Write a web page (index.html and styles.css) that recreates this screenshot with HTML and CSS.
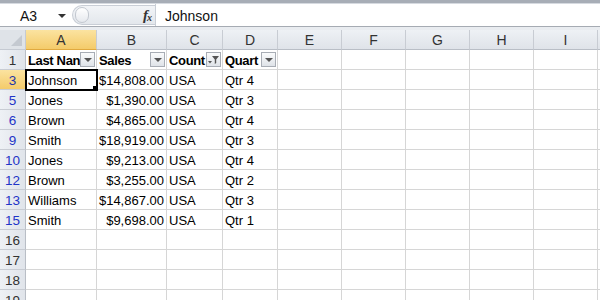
FILE: index.html
```html
<!DOCTYPE html>
<html>
<head>
<meta charset="utf-8">
<link rel="stylesheet" href="styles.css">
</head>
<body>
<div class="app">
  <div class="topstrip"></div>
  <div class="fbar">
    <div class="namebox"><span class="nb-text">A3</span><span class="nb-arrow"></span></div>
    <div class="grip">
      <span class="knob"></span>
      <span class="fx">f<sub>x</sub></span>
    </div>
    <div class="finput">Johnson</div>
  </div>
  <div class="gap"></div>
  <div class="sheet">
    <div class="corner"><span class="corner-tri"></span></div>
    <div class="ch sel">A</div><div class="ch">B</div><div class="ch">C</div><div class="ch">D</div><div class="ch">E</div><div class="ch">F</div><div class="ch">G</div><div class="ch">H</div><div class="ch">I</div><div class="ch rest"></div>

    <div class="rh">1</div>
    <div class="c hd">Last Nan<span class="fbtn"><span class="tri"></span></span></div>
    <div class="c hd">Sales<span class="fbtn"><span class="tri"></span></span></div>
    <div class="c hd">Count<span class="fbtn on"><svg width="13" height="13" viewBox="0 0 13 13"><path d="M5 3h7l-2.8 3.5v3.5l-1.4 1v-4.5z" fill="#555"/><path d="M1 8h4l-2 2.4z" fill="#555"/></svg></span></div>
    <div class="c hd">Quart<span class="fbtn"><span class="tri"></span></span></div>
    <div class="c"></div><div class="c"></div><div class="c"></div><div class="c"></div><div class="c"></div><div class="c rest"></div>

    <div class="rh blue selr">3</div>
    <div class="c active">Johnson<span class="handle"></span></div><div class="c num">$14,808.00</div><div class="c">USA</div><div class="c">Qtr 4</div>
    <div class="c"></div><div class="c"></div><div class="c"></div><div class="c"></div><div class="c"></div><div class="c rest"></div>

    <div class="rh blue">5</div>
    <div class="c">Jones</div><div class="c num">$1,390.00</div><div class="c">USA</div><div class="c">Qtr 3</div>
    <div class="c"></div><div class="c"></div><div class="c"></div><div class="c"></div><div class="c"></div><div class="c rest"></div>

    <div class="rh blue">6</div>
    <div class="c">Brown</div><div class="c num">$4,865.00</div><div class="c">USA</div><div class="c">Qtr 4</div>
    <div class="c"></div><div class="c"></div><div class="c"></div><div class="c"></div><div class="c"></div><div class="c rest"></div>

    <div class="rh blue">9</div>
    <div class="c">Smith</div><div class="c num">$18,919.00</div><div class="c">USA</div><div class="c">Qtr 3</div>
    <div class="c"></div><div class="c"></div><div class="c"></div><div class="c"></div><div class="c"></div><div class="c rest"></div>

    <div class="rh blue">10</div>
    <div class="c">Jones</div><div class="c num">$9,213.00</div><div class="c">USA</div><div class="c">Qtr 4</div>
    <div class="c"></div><div class="c"></div><div class="c"></div><div class="c"></div><div class="c"></div><div class="c rest"></div>

    <div class="rh blue">12</div>
    <div class="c">Brown</div><div class="c num">$3,255.00</div><div class="c">USA</div><div class="c">Qtr 2</div>
    <div class="c"></div><div class="c"></div><div class="c"></div><div class="c"></div><div class="c"></div><div class="c rest"></div>

    <div class="rh blue">13</div>
    <div class="c">Williams</div><div class="c num">$14,867.00</div><div class="c">USA</div><div class="c">Qtr 3</div>
    <div class="c"></div><div class="c"></div><div class="c"></div><div class="c"></div><div class="c"></div><div class="c rest"></div>

    <div class="rh blue">15</div>
    <div class="c">Smith</div><div class="c num">$9,698.00</div><div class="c">USA</div><div class="c">Qtr 1</div>
    <div class="c"></div><div class="c"></div><div class="c"></div><div class="c"></div><div class="c"></div><div class="c rest"></div>

    <div class="rh">16</div>
    <div class="c"></div><div class="c"></div><div class="c"></div><div class="c"></div><div class="c"></div><div class="c"></div><div class="c"></div><div class="c"></div><div class="c"></div><div class="c rest"></div>
    <div class="rh">17</div>
    <div class="c"></div><div class="c"></div><div class="c"></div><div class="c"></div><div class="c"></div><div class="c"></div><div class="c"></div><div class="c"></div><div class="c"></div><div class="c rest"></div>
    <div class="rh">18</div>
    <div class="c"></div><div class="c"></div><div class="c"></div><div class="c"></div><div class="c"></div><div class="c"></div><div class="c"></div><div class="c"></div><div class="c"></div><div class="c rest"></div>
    <div class="rh">19</div>
    <div class="c"></div><div class="c"></div><div class="c"></div><div class="c"></div><div class="c"></div><div class="c"></div><div class="c"></div><div class="c"></div><div class="c"></div><div class="c rest"></div>
  </div>
</div>
</body>
</html>
```

FILE: styles.css
```css
html, body {
  margin: 0;
  padding: 0;
  background: #ffffff;
  overflow: hidden;
}
.app {
  width: 600px;
  height: 300px;
  overflow: hidden;
  font-family: "Liberation Sans", Arial, sans-serif;
  color: #000;
}
.topstrip {
  height: 3px;
  background: #a7adb6;
  border-bottom: 1px solid #d6dae0;
}
.fbar {
  display: flex;
  height: 22px;
  background: #ffffff;
}
.namebox {
  width: 72px;
  display: flex;
  align-items: center;
  justify-content: space-between;
  box-sizing: border-box;
  padding: 1px 6px 0 20px;
  font-size: 14px;
  color: #111;
}
.nb-arrow {
  width: 0;
  height: 0;
  border-left: 4px solid transparent;
  border-right: 4px solid transparent;
  border-top: 4px solid #333;
}
.grip {
  width: 83px;
  margin: 1px 0;
  display: flex;
  align-items: center;
  justify-content: space-between;
  box-sizing: border-box;
  padding: 0 4px 0 2px;
  background: linear-gradient(#f2f4f7, #e3e7ec);
  border: 1px solid #c9ced6;
  border-right: none;
  border-radius: 11px 0 0 11px;
}
.knob {
  width: 14px;
  height: 16px;
  border-radius: 8px;
  border: 1px solid #c3c8d0;
  background: linear-gradient(#ffffff, #e6e9ee);
  box-sizing: border-box;
}
.fx {
  font-family: "Liberation Serif", "Times New Roman", serif;
  font-style: italic;
  font-weight: bold;
  font-size: 15px;
  color: #333;
  letter-spacing: -1px;
}
.fx sub {
  font-size: 10px;
  vertical-align: -1px;
}
.finput {
  flex: 1;
  display: flex;
  align-items: center;
  padding: 1px 0 0 9px;
  font-size: 14px;
  border-left: 1px solid #c9ced6;
  color: #111;
}
.gap {
  height: 3px;
  border-top: 1px solid #a6abb3;
  background: #e9ecf0;
}
.sheet {
  display: grid;
  grid-template-columns: 26px 71px 70px 56px 55px 64px 64px 64px 64px 64px 20px;
  grid-auto-rows: 20px;
  font-size: 13px;
}
.corner {
  background: #dfe3e8;
  border-right: 1px solid #c5cad2;
  border-bottom: 1px solid #c5cad2;
  position: relative;
}
.corner-tri {
  position: absolute;
  right: 3px;
  bottom: 3px;
  width: 0;
  height: 0;
  border-left: 11px solid transparent;
  border-bottom: 11px solid #c4c9d0;
}
.ch {
  background: linear-gradient(#eef1f5, #dfe3e9);
  border-right: 1px solid #c8ccd3;
  border-bottom: 1px solid #b9bec6;
  display: flex;
  align-items: center;
  justify-content: center;
  padding-top: 1px;
  font-size: 14px;
  color: #333;
}
.ch.sel {
  background: linear-gradient(#fbe3a0, #f4cb6a);
  border-bottom-color: #e0a93f;
}
.rh {
  background: linear-gradient(90deg, #eef1f5, #e0e4ea);
  border-right: 1px solid #b9bec6;
  border-bottom: 1px solid #c8ccd3;
  display: flex;
  align-items: center;
  justify-content: center;
  padding-top: 1px;
  font-size: 13.5px;
  color: #333;
}
.rh.blue {
  color: #1f35c8;
}
.rh.selr {
  background: linear-gradient(#fbe3a0, #f4cb6a);
  color: #1f35a8;
}
.c {
  border-right: 1px solid #d6d6d6;
  border-bottom: 1px solid #d6d6d6;
  display: flex;
  align-items: center;
  padding: 1px 2px 0;
  white-space: nowrap;
  overflow: hidden;
  position: relative;
}
.c.rest {
  border-right: none;
}
.c.num {
  justify-content: flex-end;
}
.c.hd {
  font-weight: bold;
  letter-spacing: -0.35px;
  overflow: visible;
}
.fbtn {
  position: absolute;
  right: 1px;
  top: 2px;
  width: 15px;
  height: 15px;
  box-sizing: border-box;
  border: 1px solid #a8adb5;
  background: linear-gradient(#fafbfc, #dfe3e8);
  display: flex;
  align-items: center;
  justify-content: center;
}
.tri {
  width: 0;
  height: 0;
  border-left: 4px solid transparent;
  border-right: 4px solid transparent;
  border-top: 4px solid #555;
}
.active {
  outline: 2px solid #000;
  outline-offset: -1px;
  z-index: 2;
}
.handle {
  position: absolute;
  right: -3px;
  bottom: -3px;
  width: 5px;
  height: 5px;
  background: #000;
  border: 1px solid #fff;
}
```
